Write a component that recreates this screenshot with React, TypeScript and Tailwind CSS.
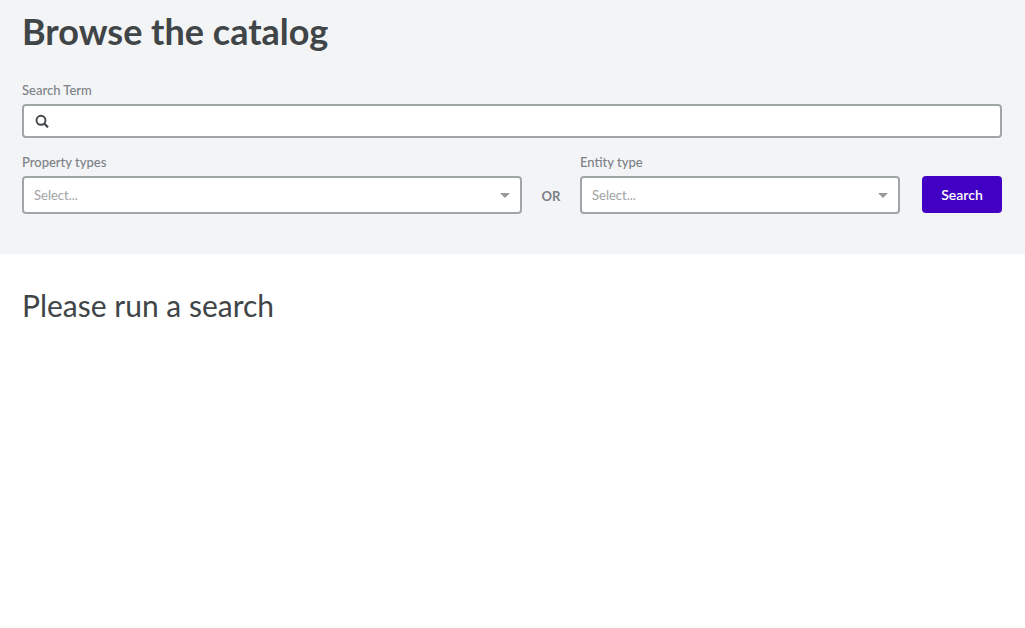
import React from "react";

function SearchIcon() {
  return (
    <svg viewBox="0 0 14 14" fill="none" stroke="currentColor" className="size-[14px] shrink-0" aria-hidden="true">
      <circle cx="6" cy="6.3" r="4.5" strokeWidth="1.9" />
      <path d="M9.2 9.5 13 13.3" strokeWidth="2.2" />
    </svg>
  );
}

function Picker({ id, label, className }: { id: string; label: string; className: string }) {
  return (
    <div className={className}>
      <label htmlFor={id} className="block text-[13px] leading-5 font-medium text-[#7d8188]">
        {label}
      </label>
      <div className="mt-1 grid">
        <select
          id={id}
          defaultValue=""
          className="col-start-1 row-start-1 h-[38px] w-full appearance-none rounded-[4px] border-2 border-[#a0a5a8] bg-white px-[10px] pt-[2px] text-[13px] text-[#a0a2a3]"
        >
          <option value="">Select...</option>
        </select>
        <svg viewBox="0 0 10 5" className="pointer-events-none col-start-1 row-start-1 mr-3 h-[5px] w-[10px] self-center justify-self-end fill-[#999999]">
          <path d="M0 0h10L5 5z" />
        </svg>
      </div>
    </div>
  );
}

export default function App() {
  return (
    <div className="min-h-screen bg-white font-['Lato',sans-serif] text-[#404548]">
      <header className="bg-[#f3f4f6] px-[22px] pt-2 pb-10">
        <h1 className="text-4xl leading-[46px] font-bold">Browse the catalog</h1>
        <form className="mt-[26px]" onSubmit={(e) => e.preventDefault()}>
          <label htmlFor="term" className="block text-[13px] leading-5 font-medium text-[#7d8188]">
            Search Term
          </label>
          <div className="mt-1 mr-px flex h-[34px] items-center gap-2 rounded-[4px] border-2 border-[#a0a5a8] bg-white px-[11px]">
            <SearchIcon />
            <input id="term" type="text" className="min-w-0 flex-1 bg-transparent text-[13px] outline-none" />
          </div>
          <div className="mt-[14px] mr-px flex items-end">
            <Picker id="property" label="Property types" className="min-w-0 flex-[500]" />
            <span className="w-[58px] pb-2 text-center text-[13px] leading-5 font-bold text-[#7d8188]">OR</span>
            <Picker id="entity" label="Entity type" className="min-w-0 flex-[320]" />
            <button type="submit" className="mb-px ml-[22px] h-[37px] w-20 rounded-[4px] bg-[#4200c4] text-sm font-semibold text-white">
              Search
            </button>
          </div>
        </form>
      </header>
      <main className="px-[22px] pt-8">
        <h2 className="text-[30px] leading-[38px]">Please run a search</h2>
      </main>
    </div>
  );
}
